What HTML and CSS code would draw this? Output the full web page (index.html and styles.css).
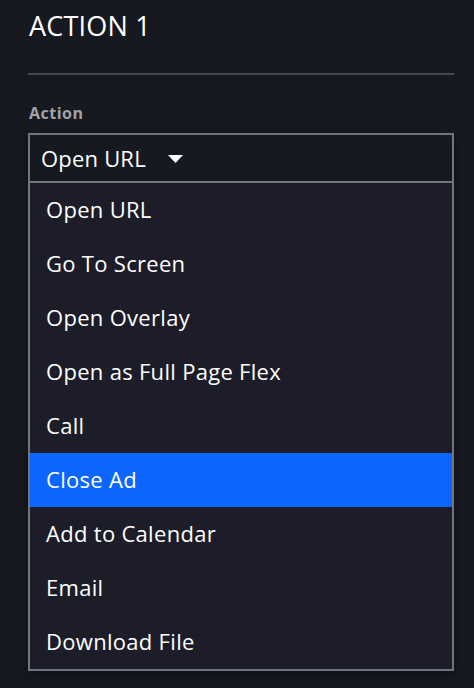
FILE: index.html
```html
<!DOCTYPE html>
<html>
<head>
<meta charset="utf-8">
<link rel="stylesheet" href="styles.css">
</head>
<body>
<div class="panel">
  <h1 class="title">ACTION 1</h1>
  <hr class="divider">
  <div class="label">Action</div>
  <div class="select">
    <div class="select-value">
      <span>Open URL</span>
      <svg class="caret" width="15" height="8" viewBox="0 0 15 8"><path d="M0 0 L15 0 L7.5 8 Z" fill="#fff"/></svg>
    </div>
    <ul class="menu">
      <li class="item">Open URL</li>
      <li class="item">Go To Screen</li>
      <li class="item">Open Overlay</li>
      <li class="item">Open as Full Page Flex</li>
      <li class="item">Call</li>
      <li class="item active">Close Ad</li>
      <li class="item">Add to Calendar</li>
      <li class="item">Email</li>
      <li class="item">Download File</li>
    </ul>
  </div>
</div>
</body>
</html>
```
FILE: styles.css
```css
html, body {
  margin: 0;
  padding: 0;
  background: #171921;
  height: 100%;
}
body {
  font-family: "Open Sans", "Noto Sans", sans-serif;
  color: #ffffff;
  overflow: hidden;
}
.panel {
  padding: 0 20px 0 28px;
}
.title {
  margin: 0;
  padding-top: 10px;
  font-size: 27px;
  font-weight: 400;
  line-height: 32px;
  letter-spacing: 0.2px;
  padding-left: 1px;
}
.divider {
  margin: 31px 0 0 0;
  border: none;
  height: 2px;
  background: #45474f;
}
.label {
  margin-top: 28px;
  font-size: 16px;
  font-weight: 700;
  color: #a3a3a6;
  line-height: 20px;
  padding-left: 1px;
  letter-spacing: 0.5px;
}
.select {
  margin-top: 10px;
  border: 2px solid #72747f;
  box-shadow: 0 4px 12px rgba(0,0,0,0.35);
}
.select-value {
  height: 46px;
  display: flex;
  align-items: center;
  gap: 22px;
  padding-left: 11px;
  font-size: 22px;
  letter-spacing: 0.2px;
  border-bottom: 2px solid #72747f;
  background: #171921;
}
.caret {
  margin-top: 2px;
}
.menu {
  list-style: none;
  margin: 0;
  padding: 0;
  background: #1c1d28;
}
.item {
  height: 54px;
  line-height: 52px;
  padding-left: 16px;
  font-size: 22px;
  letter-spacing: 0.3px;
  box-sizing: border-box;
}
.item.active {
  background: #0a66ff;
}
```
